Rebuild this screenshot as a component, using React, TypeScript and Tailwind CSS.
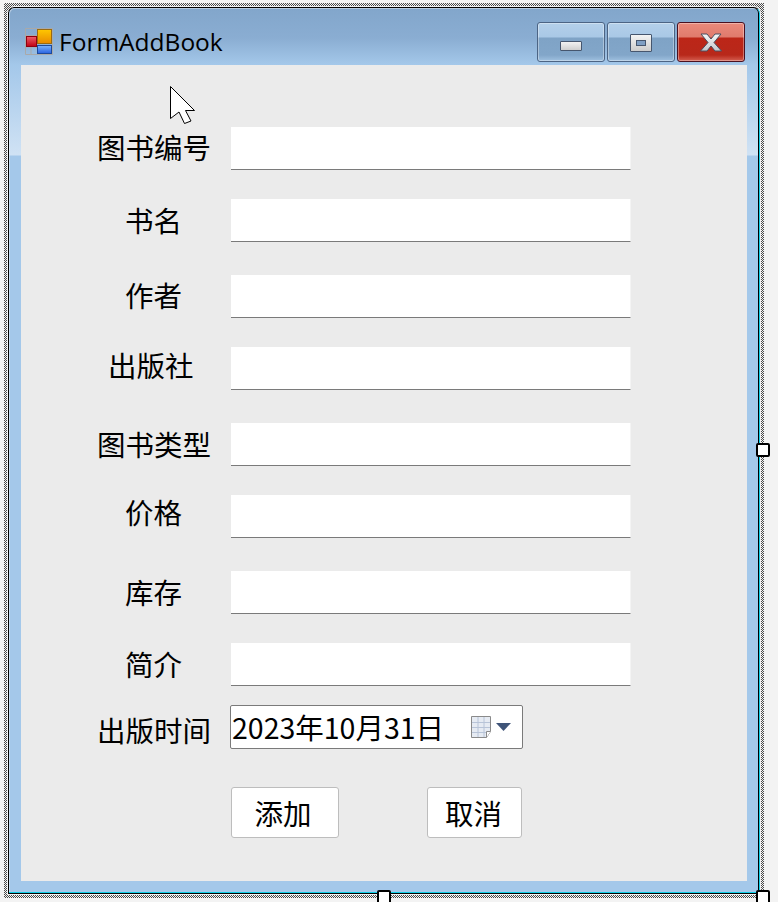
const font = { cjk: "font-['Noto_Sans_CJK_SC','Noto_Sans',sans-serif]" };

const rows = [
  { label: "图书编号", row: "mt-[62px]", lab: "pt-[3px] pl-[76px] w-[210px]" },
  { label: "书名", row: "mt-[29px]", lab: "pt-[4px] pl-[104px] w-[210px]" },
  { label: "作者", row: "mt-[33px]", lab: "pt-[3px] pl-[104px] w-[210px]" },
  { label: "出版社", row: "mt-[29px]", lab: "pt-[1px] pl-[87px] w-[210px]" },
  { label: "图书类型", row: "mt-[33px]", lab: "pt-[4px] pl-[76px] w-[210px]" },
  { label: "价格", row: "mt-[29px]", lab: "pt-[0px] pl-[104px] w-[210px]" },
  { label: "库存", row: "mt-[33px]", lab: "pt-[4px] pl-[104px] w-[210px]" },
  { label: "简介", row: "mt-[29px]", lab: "pt-[4px] pl-[104px] w-[210px]" },
];

function Handle({ className }: { className: string }) {
  return <div className={"absolute w-[14px] h-[14px] bg-white border-2 border-black rounded-[2px] " + className} />;
}

function CaptionButton({ kind }: { kind: "min" | "max" | "close" }) {
  const tone =
    kind === "close"
      ? "border-[#4a1020] bg-[linear-gradient(to_bottom,#ea8a7c_0px,#e07a6c_14px,#bc2618_15px,#b8281a_32px,#d9685a_39px)]"
      : "border-[#4c6484] bg-[linear-gradient(to_bottom,#b4d0ea_0px,#a9c8e6_14px,#7fa3c6_15px,#82a6c9_32px,#a4c5e4_39px)]";
  return (
    <div className={"w-[68px] h-[40px] rounded-[3px] border flex items-center justify-center shadow-[inset_0_0_0_1px_rgba(255,255,255,0.35)] " + tone}>
      {kind === "min" && (
        <div className="mt-[8px] w-[22px] h-[10px] rounded-[1px] border border-[#46566e] bg-[linear-gradient(to_bottom,#f2f2f2,#cfcfcf)]" />
      )}
      {kind === "max" && (
        <div className="mt-[2px] w-[22px] h-[18px] rounded-[1px] border border-[#46566e] bg-[linear-gradient(to_bottom,#f4f4f4,#cccccc)] flex items-center justify-center">
          <div className="w-[10px] h-[6px] border border-[#46566e] bg-[#7f9fc4]" />
        </div>
      )}
      {kind === "close" && (
        <svg width="24" height="20" viewBox="0 0 24 20" className="mt-[1px]">
          <defs>
            <linearGradient id="x" x1="0" y1="0" x2="0" y2="1">
              <stop offset="0" stopColor="#f6f6f6" />
              <stop offset="1" stopColor="#c4c8cc" />
            </linearGradient>
          </defs>
          <polygon
            points="2,1 8,1 12,6 16,1 22,1 15,9.5 22.5,18 16,18 12,13 8,18 1.5,18 9,9.5"
            fill="url(#x)"
            stroke="#4a4f60"
            strokeWidth="1"
          />
        </svg>
      )}
    </div>
  );
}

function AppIcon() {
  return (
    <svg width="28" height="28" viewBox="0 0 28 28" className="shrink-0">
      <defs>
        <linearGradient id="r" x1="0" y1="0" x2="0" y2="1"><stop offset="0" stopColor="#f0606a" /><stop offset="1" stopColor="#c00012" /></linearGradient>
        <linearGradient id="o" x1="0" y1="0" x2="0" y2="1"><stop offset="0" stopColor="#ffc800" /><stop offset="1" stopColor="#e88a00" /></linearGradient>
        <linearGradient id="b" x1="0" y1="0" x2="0" y2="1"><stop offset="0" stopColor="#7ab4ff" /><stop offset="1" stopColor="#2a62e0" /></linearGradient>
      </defs>
      <path d="M0.5 0.5H27.5V26.5H0.5Z M0.5 7.5H12 M6 7.5V26.5 M0.5 19H12" fill="none" stroke="#a9a9a9" strokeWidth="1" />
      <rect x="1.5" y="8.5" width="10" height="10" fill="url(#r)" stroke="#900010" />
      <rect x="12.5" y="1.5" width="14" height="14" fill="url(#o)" stroke="#9a6a10" />
      <rect x="12.5" y="17.5" width="14" height="8" fill="url(#b)" stroke="#1d4a9c" />
    </svg>
  );
}

export default function App() {
  return (
    <div className={"relative w-[778px] h-[902px] overflow-hidden bg-[#f3f3f3] pl-[4px] pt-[3px] " + font.cjk}>
      {/* selection frame */}
      <div className="relative w-[760px] h-[895px] p-[4px] bg-[repeating-conic-gradient(#4a4a4a_0_25%,#f3f3f3_0_50%)] bg-[length:2px_2px]">
        {/* window */}
        <div className="w-[752px] h-[887px] rounded-t-[6px] border border-black border-r-[#10cfe8] bg-[linear-gradient(to_bottom,#82a6cb_0px,#8aadd2_30px,#a4c8ea_57px,#a4c8ea_58px,#d0e2f4_147px,#a4c8ea_148px,#a4c8ea_100%)] flex flex-col outline outline-1 outline-[#f3f3f3] shadow-[inset_-1px_0_0_#000000,inset_0_-1px_0_#10cfe8,inset_1px_1px_0_rgba(255,255,255,0.4)]">
          {/* title bar */}
          <div className="h-[57px] flex pl-[16px] pr-[14px] shrink-0">
            <div className="flex items-center gap-[6px] h-[40px] self-start mt-[14px]">
              <AppIcon />
              <span className="font-['Open_Sans','Noto_Sans',sans-serif] text-[24.5px] leading-[30px] text-black">FormAddBook</span>
            </div>
            <div className="ml-auto flex gap-[2px] pt-[14px]">
              <CaptionButton kind="min" />
              <CaptionButton kind="max" />
              <CaptionButton kind="close" />
            </div>
          </div>
          {/* client area */}
          <div className="ml-[12px] w-[726px] h-[816px] bg-[#ebebeb] flex flex-col text-[28.5px] leading-[34px] text-black">
            {rows.map((r) => (
              <div key={r.label} className={"flex items-start h-[43px] shrink-0 " + r.row}>
                <div className={"shrink-0 " + r.lab}>{r.label}</div>
                <div className="w-[400px] h-[43px] bg-white border-b border-r border-[#f4f4f4] border-b-[#7a7a7a] shrink-0" />
              </div>
            ))}
            <div className="flex items-start h-[44px] mt-[19px] shrink-0">
              <div className="w-[209px] pl-[76px] pt-[8px] shrink-0">出版时间</div>
              <div className="w-[293px] h-[44px] bg-white border border-[#7a7a7a] rounded-[2px] flex items-center pl-[1px] shrink-0">
                <span className="whitespace-nowrap">2023年10月31日</span>
                <svg width="41" height="23" viewBox="0 0 41 23" className="ml-[27px] shrink-0">
                  <path d="M0.5 0.5H19.5V15.5L15.5 21.5H0.5Z" fill="#e6ebf3" stroke="#8a8a8a" />
                  <path d="M1 6.5H19M1 11.5H19M1 16.5H15M7 1V21M13 1V21" stroke="#b8c4d8" fill="none" />
                  <path d="M15.5 21.5V15.5H19.5" fill="#ffffff" stroke="#8a8a8a" />
                  <polygon points="25,7 40,7 32.5,15" fill="#3f5478" />
                </svg>
              </div>
            </div>
            <div className="flex mt-[38px] pl-[210px] shrink-0">
              <div className="w-[108px] h-[51px] bg-white border border-[#bdbdbd] rounded-[3px] flex items-center justify-center pr-[4px]">添加</div>
              <div className="ml-[88px] w-[95px] h-[51px] bg-white border border-[#bdbdbd] rounded-[3px] flex items-center justify-center pr-[2px]">取消</div>
            </div>
          </div>
        </div>
        <Handle className="right-[-6px] top-[440px]" />
        <Handle className="left-[373px] bottom-[-6px]" />
        <Handle className="right-[-6px] bottom-[-6px]" />
      </div>
      {/* mouse cursor */}
      <svg width="28" height="40" viewBox="0 0 28 40" className="absolute left-[169px] top-[85px]">
        <path d="M1.5 1.5V33.5L10 27L15.5 38.5L22 36L16.5 25.5H25.5Z" fill="#ffffff" stroke="#000000" strokeWidth="1" strokeLinejoin="round" />
      </svg>
    </div>
  );
}
